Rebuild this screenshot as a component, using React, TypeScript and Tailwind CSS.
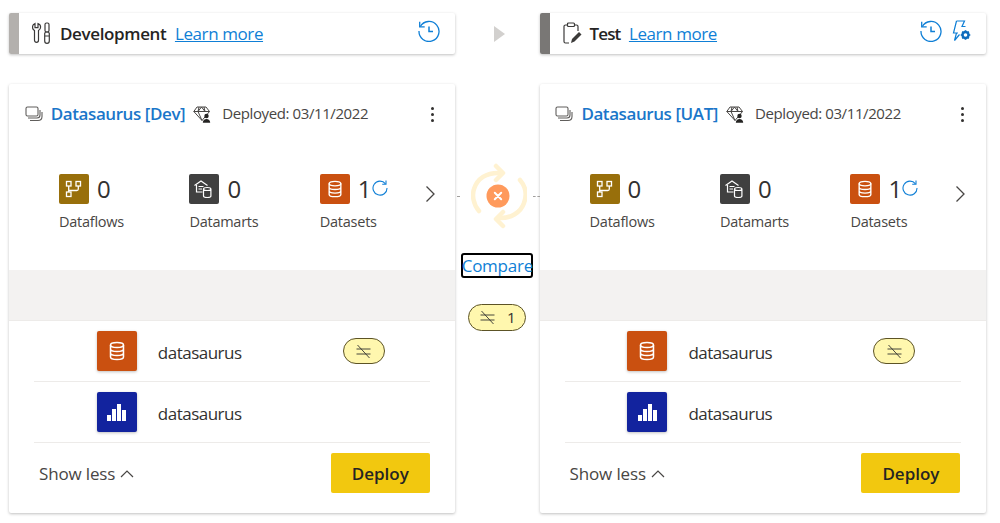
import React from "react";

const FONT = "font-['Open_Sans','Noto_Sans',sans-serif]";

function ToolsIcon() {
  return (
    <svg width="20" height="22" viewBox="0 0 20 22" fill="none" stroke="#3b3a39" strokeWidth="1.2">
      <path d="M3 1.500v4.200h3V1.500c1.600.6 2.600 2 2.600 3.600 0 1.500-.9 2.800-2.100 3.400v9.800a2 2 0 0 1-4 0V8.500C1.300 7.900.5 6.600.5 5.100.5 3.500 1.500 2.100 3 1.500z" />
      <rect x="13" y="1" width="4" height="9" rx="1.500" />
      <path d="M13.500 10h3l.8 1.500v7.500a2.300 2.300 0 0 1-4.600 0v-7.500z" />
      <path d="M12.800 14h4.400" />
    </svg>
  );
}

function ClipboardIcon() {
  return (
    <svg width="20" height="22" viewBox="0 0 20 22" fill="none" stroke="#3b3a39" strokeWidth="1.200">
      <path d="M5 3H3.500A1.500 1.500 0 0 0 2 4.500v15A1.500 1.500 0 0 0 3.500 21H7M13 3h1.500A1.500 1.500 0 0 1 16 4.500V9" />
      <rect x="5.500" y="1" width="7" height="3.500" rx="1" />
      <path d="M9 21l1-4 7-7 2.500 2.500-7 7z" fill="#3b3a39" stroke="none" />
    </svg>
  );
}

function HistoryIcon() {
  return (
    <svg width="22" height="22" viewBox="0 0 22 22" fill="none" stroke="#0f7fd6" strokeWidth="1.300">
      <path d="M2.300 6.500A10 10 0 1 1 1 11" />
      <path d="M1.700 1.800v5h5" />
      <path d="M11 6.500v5h4" strokeWidth="1.500" />
    </svg>
  );
}

function BoltGearIcon() {
  return (
    <svg width="20" height="22" viewBox="0 0 20 22" fill="none">
      <path d="M5.500 1h8l-2.500 5.500h3.500M7 13H2.500l3-12M5.500 13l-2 7.500 5-6" stroke="#0f7fd6" strokeWidth="1.200" />
      <circle cx="14.500" cy="15" r="3" stroke="#0f6cbd" strokeWidth="2.400" />
      <path d="M14.500 10.200v2M14.500 17.800v2M9.700 15h2M17.300 15h2M11.100 11.600l1.400 1.400M16.500 17l1.400 1.400M17.900 11.600 16.500 13M12.500 17l-1.400 1.400" stroke="#0f6cbd" strokeWidth="1.600" />
    </svg>
  );
}

function WorkspaceIcon() {
  return (
    <svg width="18" height="16" viewBox="0 0 18 16" fill="none" stroke="#605e5c" strokeWidth="1.100">
      <rect x="1" y="1" width="12" height="9" rx="1.500" />
      <path d="M3 12h9c2 0 3-1 3-3V4" />
      <path d="M5 14.500h8c2.500 0 4-1.500 4-4V6" />
    </svg>
  );
}

function DiamondUserIcon() {
  return (
    <svg width="18" height="17" viewBox="0 0 18 17" fill="none" stroke="#484644" strokeWidth="1">
      <path d="M4 1h9l3.500 4.500L9 14.500.8 5.500z" />
      <path d="M.8 5.500h15.700M6 1 5 5.500 9 14.500M11 1l1 4.500M8.500 1 5 5.500M8.500 1l3.500 4.500" />
      <circle cx="13.500" cy="10" r="2.200" fill="#252423" stroke="none" />
      <path d="M9.800 16.800c0-2.300 1.600-3.800 3.700-3.800s3.700 1.500 3.700 3.800z" fill="#252423" stroke="none" />
    </svg>
  );
}

function KebabIcon() {
  return (
    <div className="flex flex-col gap-[3px]">
      <span className="w-[3px] h-[3px] rounded-full bg-[#323130]" />
      <span className="w-[3px] h-[3px] rounded-full bg-[#323130]" />
      <span className="w-[3px] h-[3px] rounded-full bg-[#323130]" />
    </div>
  );
}

function DataflowGlyph() {
  return (
    <svg width="20" height="20" viewBox="0 0 20 20" fill="none" stroke="#fff" strokeWidth="1.300">
      <rect x="2.500" y="2.500" width="4.500" height="4.500" />
      <rect x="12" y="2.500" width="4.500" height="4.500" />
      <rect x="2.500" y="13" width="4.500" height="4.500" />
      <path d="M4.700 7v6M14.300 7v3c0 1-.5 1.500-1.500 1.500H4.700" />
    </svg>
  );
}

function DatamartGlyph() {
  return (
    <svg width="22" height="20" viewBox="0 0 22 20" fill="none" stroke="#fff" strokeWidth="1.200">
      <path d="M1.500 6.500 8 2l6.500 4.500" />
      <path d="M3.500 6v7h6M5.500 7.500h5M5.500 10h3.500" />
      <path d="M10.500 10c0-1 1.700-1.500 3.700-1.500s3.700.5 3.700 1.500v7c0 1-1.700 1.500-3.700 1.500s-3.700-.5-3.700-1.500zM10.500 10c0 1 1.700 1.500 3.700 1.500s3.700-.5 3.700-1.500" fill="#404040" />
    </svg>
  );
}

function DatasetGlyph({ size }: { size: number }) {
  return (
    <svg width={size} height={size} viewBox="0 0 20 20" fill="none" stroke="#fff" strokeWidth="1.500">
      <ellipse cx="10" cy="4" rx="6.500" ry="2.500" />
      <path d="M3.500 4v12c0 1.400 2.900 2.500 6.500 2.500s6.500-1.100 6.500-2.500V4M3.500 8c0 1.400 2.900 2.500 6.500 2.500s6.500-1.100 6.500-2.500M3.500 12c0 1.400 2.900 2.500 6.500 2.500s6.500-1.100 6.500-2.500" />
    </svg>
  );
}

function RefreshIcon() {
  return (
    <svg width="16" height="16" viewBox="0 0 16 16" fill="none" stroke="#0f7fd6" strokeWidth="1.100">
      <path d="M13.500 3.800A7 7 0 1 0 15 8" />
      <path d="M14 .5v3.800h-3.800" />
    </svg>
  );
}

function NotEqualIcon() {
  return (
    <svg width="17" height="15" viewBox="0 0 17 15" fill="none" stroke="#323130" strokeWidth="0.900">
      <path d="M1.500 5h14M1.500 10h14M2.500 1l12 13" />
    </svg>
  );
}

function SyncIcon() {
  return (
    <svg width="56" height="66" viewBox="0 0 56 66" fill="none" stroke="#fff2d1" strokeWidth="4.500" strokeLinecap="round" strokeLinejoin="round">
      <path d="M8 48C2 41 1 32 3 26 6 16 15 9 30 10" />
      <path d="M25 3l7 7-7 7" />
      <path d="M49 17c6 7 7 15 4 23-3 9-13 16-26 15" />
      <path d="M32 63l-7-7 7-7" />
      <circle cx="27" cy="33" r="11.500" fill="#ff9a5c" stroke="none" />
      <path d="M23.800 29.800l6.400 6.400M30.200 29.800l-6.400 6.400" stroke="#fff" strokeWidth="2" />
    </svg>
  );
}

function Stat({ label, value, color, glyph, refresh }: { label: string; value: string; color: string; glyph: React.ReactNode; refresh?: boolean }) {
  return (
    <div className="w-[130.4px] shrink-0 flex flex-col">
      <div className="flex items-center h-[30px]">
        <div className={`w-[30px] h-[30px] rounded-[2px] flex items-center justify-center ${color}`}>{glyph}</div>
        <span className="ml-[8px] text-[24px] leading-[30px] text-[#323130]">{value}</span>
        {refresh && (
          <span className="mb-[3px]">
            <RefreshIcon />
          </span>
        )}
      </div>
      <div className="mt-[8px] text-[14.5px] leading-[20px] text-[#484644] tracking-[-0.25px]">{label}</div>
    </div>
  );
}

function ItemRow({ color, glyph, diff }: { color: string; glyph: React.ReactNode; diff?: boolean }) {
  return (
    <div className="h-[61px] mx-[25px] border-b border-[#edebe9] flex items-center pl-[62.8px]">
      <div className={`w-[40px] h-[40px] rounded-[2px] flex items-center justify-center shadow-[0_1px_3px_rgba(0,0,0,0.25)] ${color}`}>{glyph}</div>
      <span className="ml-[21px] w-[185px] pt-[3px] text-[17px] text-[#323130] tracking-[-0.5px]">datasaurus</span>
      {diff && (
        <span className="w-[42px] h-[26px] rounded-full bg-[#fff7ae] border border-[#5c5326] flex items-center justify-center">
          <NotEqualIcon />
        </span>
      )}
    </div>
  );
}

function BarsGlyph() {
  return (
    <div className="flex items-end gap-[1px] h-[17px]">
      <span className="w-[4px] h-[6px] bg-white" />
      <span className="w-[4px] h-[12px] bg-white" />
      <span className="w-[4px] h-[17px] bg-white" />
      <span className="w-[4px] h-[11px] bg-white" />
    </div>
  );
}

function StageHeader({ bar, icon, name, nameClass, extra }: { bar: string; icon: React.ReactNode; name: string; nameClass: string; extra?: boolean }) {
  return (
    <div className="h-[41px] bg-white rounded-[2px] overflow-hidden shadow-[0_1px_3px_rgba(0,0,0,0.25)] flex items-center">
      <div className={`w-[10px] self-stretch ${bar}`} />
      <div className={`mb-[2px] ${nameClass}`}>{icon}</div>
      <span className={`ml-[8px] text-[17px] font-semibold text-[#252423] ${name === "Test" ? "tracking-[-0.9px]" : "tracking-[-0.36px]"}`}>{name}</span>
      <span className="ml-[8.5px] text-[17px] text-[#0f7fd6] underline tracking-[-0.4px]">Learn more</span>
      <div className="ml-auto mr-[15px] mb-[5px] flex items-center gap-[9px]">
        <HistoryIcon />
        {extra && <BoltGearIcon />}
      </div>
    </div>
  );
}

function PipelineCard({ title }: { title: string }) {
  return (
    <div className="h-[429px] bg-white rounded-[2px] shadow-[0_1px_3px_rgba(0,0,0,0.25)] flex flex-col">
      <div className="h-[60px] flex items-center pl-[15.8px] pr-[21.2px]">
        <WorkspaceIcon />
        <span className="ml-[8px] text-[17px] font-semibold text-[#1a76c9] tracking-[-0.42px] whitespace-nowrap">{title}</span>
        <span className="ml-[8px]">
          <DiamondUserIcon />
        </span>
        <span className="ml-[11px] mb-[1px] text-[15px] text-[#484644] tracking-[-0.4px] whitespace-nowrap">Deployed: 03/11/2022</span>
        <span className="ml-auto">
          <KebabIcon />
        </span>
      </div>
      <div className="h-[126px] flex pl-[50px] pt-[30px] relative">
        <Stat label="Dataflows" value="0" color="bg-[#986f0b]" glyph={<DataflowGlyph />} />
        <Stat label="Datamarts" value="0" color="bg-[#404040]" glyph={<DatamartGlyph />} />
        <Stat label="Datasets" value="1" color="bg-[#ca5010]" glyph={<DatasetGlyph size={18} />} refresh />
        <svg className="absolute left-[415.8px] top-[41px]" width="11" height="18" viewBox="0 0 11 18" fill="none" stroke="#484644" strokeWidth="1.300">
          <path d="M1.500 1.500 9 9l-7.500 7.500" />
        </svg>
      </div>
      <div className="h-[51px] bg-[#f3f2f1] border-b border-[#edebe9]" />
      <ItemRow color="bg-[#ca5010]" glyph={<DatasetGlyph size={20} />} diff />
      <ItemRow color="bg-[#12239e]" glyph={<BarsGlyph />} />
      <div className="flex items-center justify-between pl-[30px] pr-[25.2px] pt-[10px]">
        <span className="flex items-center pt-[1px] text-[17px] text-[#484644] tracking-[-0.15px]">
          Show less
          <svg className="ml-[5px]" width="14" height="8" viewBox="0 0 14 8" fill="none" stroke="#484644" strokeWidth="1.200">
            <path d="M1 7l6-6 6 6" />
          </svg>
        </span>
        <button className="w-[99px] h-[40px] pt-[2px] rounded-[2px] bg-[#f2c80f] text-[17px] font-semibold text-[#252423]">Deploy</button>
      </div>
    </div>
  );
}

function Middle() {
  return (
    <div className="w-[84.6px] shrink-0 flex flex-col items-center relative">
      <div className="h-[41px] flex items-center justify-center pl-[4px]">
        <div className="w-0 h-0 border-y-[8px] border-y-transparent border-l-[11px] border-l-[#d2d0ce]" />
      </div>
      <div className="mt-[109px] h-[66px] pl-[3px]">
        <SyncIcon />
      </div>
      <div className="absolute left-[2px] top-[183px] w-[3px] border-t border-[#a19f9d]" />
      <div className="absolute left-[78px] top-[183px] w-[7px] border-t border-dashed border-[#a19f9d]" />
      <div className="mt-[24px] w-[72px] h-[25px] border-2 border-black rounded-[3px] flex items-center justify-center text-[17px] text-[#0f7fd6] whitespace-nowrap tracking-[-0.25px]">
        Compare
      </div>
      <div className="mt-[26px] w-[58px] h-[27px] rounded-full bg-[#fff7ae] border border-[#5c5326] flex items-center justify-center gap-[11px] text-[15px] text-[#323130]">
        <NotEqualIcon />
        <span>1</span>
      </div>
    </div>
  );
}

export default function App() {
  return (
    <div className={`w-[1000px] h-[523px] overflow-hidden bg-white pl-[9px] pt-[13px] flex ${FONT}`}>
      <div className="w-[446px] shrink-0 flex flex-col gap-[30px]">
        <StageHeader bar="bg-[#b3b0ad]" icon={<ToolsIcon />} name="Development" nameClass="ml-[13px]" />
        <PipelineCard title="Datasaurus [Dev]" />
      </div>
      <Middle />
      <div className="w-[446px] shrink-0 flex flex-col gap-[30px]">
        <StageHeader bar="bg-[#797775]" icon={<ClipboardIcon />} name="Test" nameClass="ml-[12px]" extra />
        <PipelineCard title="Datasaurus [UAT]" />
      </div>
    </div>
  );
}
